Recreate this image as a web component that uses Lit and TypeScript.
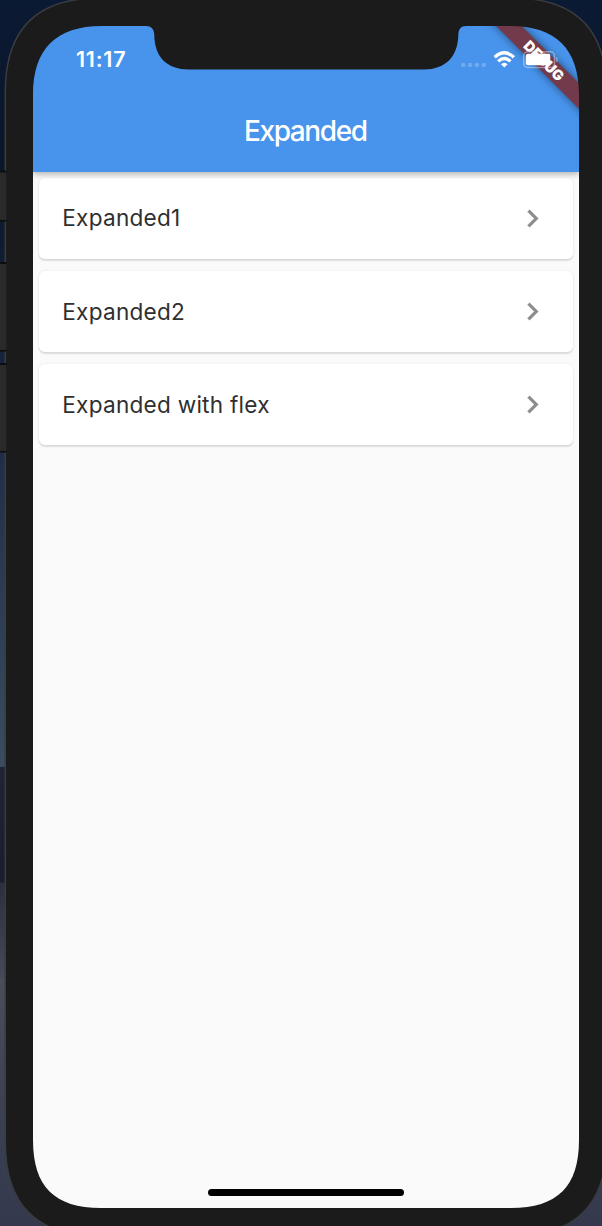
import { LitElement, html, css } from "lit";
import { customElement, property } from "lit/decorators.js";

const n = (v: number) => v.toFixed(2);

type Side = [number, number];
type Curve = { start: number; handle: number };

/** One softened corner at (x, y), running from the side `from` to the side `to`. */
function corner(x: number, y: number, c: Curve, from: Side, to: Side): string {
  const p = (a: number, b: number) => `${n(x + a * from[0] + b * to[0])} ${n(y + a * from[1] + b * to[1])}`;
  return `L${p(c.start, 0)}C${p(c.handle, 0)} ${p(0, c.handle)} ${p(0, c.start)}`;
}

function shape(l: number, t: number, r: number, b: number, top: Curve, bottom: Curve, topEdge = ""): string {
  return (
    `M${n(l)} ${n((t + b) / 2)}` +
    corner(l, t, top, [0, 1], [1, 0]) +
    topEdge +
    corner(r, t, top, [-1, 0], [0, 1]) +
    corner(r, b, bottom, [0, -1], [-1, 0]) +
    corner(l, b, bottom, [1, 0], [0, -1]) +
    "Z"
  );
}

const NOTCH = "L146 26C151 26 154.200 29 154.300 35C154.500 56 166 69.500 189 69.500H424C446 69.500 458 56 458.300 35C458.500 29 461 26 466 26";
const SCREEN = shape(33, 26, 579, 1208, { start: 69, handle: 23 }, { start: 68, handle: 21.5 }, NOTCH);
const BODY = shape(5.3, -2, 606.7, 1236, { start: 94, handle: 31 }, { start: 94, handle: 31 });

@customElement("list-card")
export class ListCard extends LitElement {
  @property() label = "";

  static styles = css`
    :host {
      display: flex;
      align-items: center;
      justify-content: space-between;
      height: 81.500px;
      padding: 0 23.300px 0 23.500px;
      box-sizing: border-box;
      background: #fff;
      border-radius: 5.800px;
      box-shadow: 0 1.300px 1.500px rgba(0, 0, 0, 0.11), 0 0 2.500px rgba(0, 0, 0, 0.08);
    }
    .label {
      font-size: 22.600px;
      line-height: 32px;
      letter-spacing: 0.240px;
      color: #2f2f2f;
      white-space: nowrap;
    }
    .chevron {
      width: 35px;
      height: 35px;
      fill: #8c8c8c;
      stroke: #8c8c8c;
      stroke-width: 0.250;
    }
  `;

  render() {
    return html`
      <span class="label">${this.label}</span>
      <svg class="chevron" viewBox="0 0 24 24"><path d="M10 6 8.590 7.410 13.170 12l-4.580 4.590L10 18l6-6z" /></svg>
    `;
  }
}

@customElement("app-root")
export class AppRoot extends LitElement {
  static styles = css`
    :host {
      display: block;
      position: relative;
      width: 602px;
      height: 1226px;
      overflow: hidden;
      font-family: Inter, "Liberation Sans", sans-serif;
      background: linear-gradient(
        #0b1a33 0, #0a1629 160px, #13213a 340px, #202f49 460px, #3a4d5f 767px,
        #1f2336 767px, #1a1d2e 882px, #2b303d 883px, #454958 977px,
        #4a4e5a 978px, #3c4254 1100px, #34394d 1226px
      );
    }
    .frame {
      position: absolute;
      inset: 0;
      pointer-events: none;
    }
    .screen {
      position: relative;
      box-sizing: border-box;
      width: 546px;
      height: 1182px;
      margin: 26px 0 0 33px;
      display: flex;
      flex-direction: column;
      background: #fafafa;
    }
    .appbar {
      position: relative;
      flex: none;
      height: 145.500px;
      background: #4894ec;
      box-shadow: 0 3px 5px rgba(0, 0, 0, 0.16), 0 1px 7px rgba(0, 0, 0, 0.14);
    }
    .status {
      display: flex;
      justify-content: space-between;
      height: 64px;
      box-sizing: border-box;
      padding-left: 43px;
    }
    .time {
      padding-top: 19px;
      font-size: 21.500px;
      line-height: 28px;
      font-weight: 600;
      letter-spacing: 0.750px;
      color: #fff;
    }
    .indicators {
      position: relative;
      z-index: 1;
      width: 126px;
      height: 64px;
    }
    .title {
      height: 81.500px;
      line-height: 83px;
      text-align: center;
      font-size: 28px;
      font-weight: 500;
      letter-spacing: -1.400px;
      text-indent: -1.400px;
      color: #fff;
    }
    .list {
      flex: 1;
      display: flex;
      flex-direction: column;
      gap: 11.650px;
      padding: 6.200px 5.800px 0;
    }
    .home {
      align-self: center;
      width: 196px;
      height: 7px;
      margin-bottom: 12px;
      border-radius: 4px;
      background: #000;
    }
    .banner {
      position: absolute;
      top: 0;
      right: 0;
      width: 126px;
      height: 126px;
      overflow: hidden;
    }
    .ribbon {
      position: absolute;
      left: 1px;
      top: 25.500px;
      width: 180px;
      height: 17.600px;
      transform: rotate(45deg);
      background: #733a4c;
      box-shadow: 0 0 9px rgba(0, 0, 0, 0.5);
      color: #fff;
      font-size: 14.400px;
      line-height: 18px;
      font-weight: 900;
      text-align: center;
    }
  `;

  render() {
    return html`
      <main class="screen">
        <header class="appbar">
          <div class="banner"><div class="ribbon">DEBUG</div></div>
          <div class="status">
            <span class="time">11:17</span>
            <svg class="indicators" viewBox="453 26 126 64">
              <g fill="#fff" fill-opacity=".22">
                <circle cx="463.300" cy="65" r="2.300" /><circle cx="470.100" cy="65" r="2.300" />
                <circle cx="476.900" cy="65" r="2.300" /><circle cx="483.700" cy="65" r="2.300" />
              </g>
              <g fill="none" stroke="#fff" stroke-width="3.300">
                <path d="M494.700 57.200Q504.300 48.400 513.900 57.200" />
                <path d="M498.200 61.400Q504.300 55.800 510.400 61.400" />
              </g>
              <path fill="#fff" d="M501 64.300Q504.300 61.300 507.600 64.300L504.300 67.500Z" />
              <rect x="523.700" y="51.700" width="30.800" height="15.800" rx="4.200" fill="none" stroke="#fff" stroke-opacity=".4" stroke-width="1.500" />
              <rect x="525.800" y="53.700" width="24.500" height="11.500" rx="2" fill="#fff" />
              <path d="M556.200 56.800C558.400 57.700 558.400 61.500 556.200 62.400Z" fill="#fff" fill-opacity=".4" />
            </svg>
          </div>
          <div class="title">Expanded</div>
        </header>
        <section class="list">
          ${["Expanded1", "Expanded2", "Expanded with flex"].map((t) => html`<list-card .label=${t}></list-card>`)}
        </section>
        <div class="home"></div>
      </main>
      <svg class="frame" width="602" height="1226" viewBox="0 0 602 1226">
        <path d="${BODY}${SCREEN}" fill="#1b1b1b" fill-rule="evenodd" />
        <path d="${BODY}" fill="none" stroke="#393c40" stroke-width="1.500" />
        <path d="M0 170.500H6.500V221.500H0ZM0 262H6.500V351.500H0ZM0 363H6.500V452.500H0Z" fill="#0d0d10" />
        <path d="M0 172.500H6.500V220H0ZM0 264H6.500V350H0ZM0 365H6.500V451H0Z" fill="#2a2a2a" />
      </svg>
    `;
  }
}
